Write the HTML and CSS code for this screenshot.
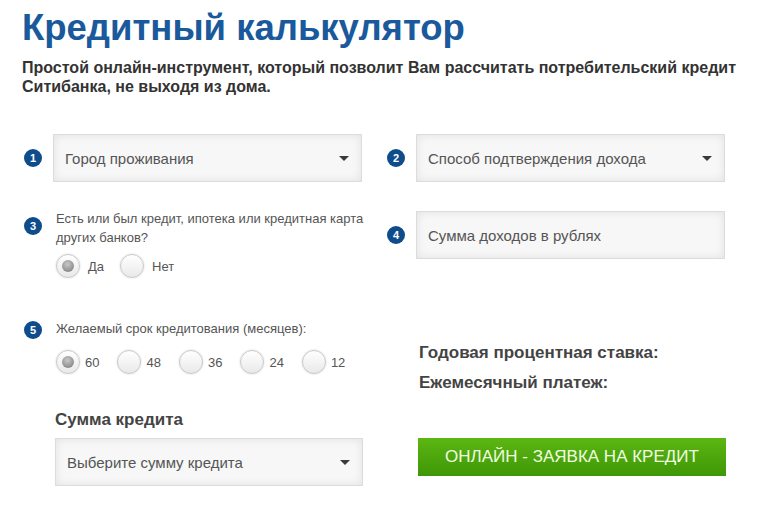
FILE: index.html
```html
<!DOCTYPE html>
<html lang="ru">
<head>
<meta charset="utf-8">
<title>Кредитный калькулятор</title>
<link rel="stylesheet" href="styles.css">
</head>
<body>
<div class="page">
  <h1 class="title">Кредитный калькулятор</h1>
  <p class="lead">Простой онлайн-инструмент, который позволит Вам рассчитать потребительский кредит Ситибанка, не выходя из дома.</p>

  <div class="calc">
    <div class="item row1">
      <span class="badge">1</span>
      <div class="field select"><span>Город проживания</span><i class="arrow"></i></div>
    </div>
    <div class="item row1">
      <span class="badge">2</span>
      <div class="field select"><span>Способ подтверждения дохода</span><i class="arrow"></i></div>
    </div>

    <div class="item row2 q3">
      <span class="badge">3</span>
      <div class="group">
        <div class="label two">Есть или был кредит, ипотека или кредитная карта других банков?</div>
        <div class="radios yesno">
          <label class="opt"><span class="radio on"></span>Да</label>
          <label class="opt"><span class="radio"></span>Нет</label>
        </div>
      </div>
    </div>
    <div class="item row2 q4">
      <span class="badge">4</span>
      <div class="field"><span>Сумма доходов в рублях</span></div>
    </div>

    <div class="item row3 top">
      <span class="badge b5">5</span>
      <div class="group">
        <div class="label">Желаемый срок кредитования (месяцев):</div>
        <div class="radios terms">
          <label class="opt"><span class="radio on"></span>60</label>
          <label class="opt"><span class="radio"></span>48</label>
          <label class="opt"><span class="radio"></span>36</label>
          <label class="opt"><span class="radio"></span>24</label>
          <label class="opt"><span class="radio"></span>12</label>
        </div>
      </div>
    </div>
    <div class="item row3 results">
      <div class="result">Годовая процентная ставка:</div>
      <div class="result">Ежемесячный платеж:</div>
    </div>

    <div class="item row4 sum">
      <div class="sum-title">Сумма кредита</div>
      <div class="field select sum-field"><span>Выберите сумму кредита</span><i class="arrow"></i></div>
    </div>
    <div class="item row4 action">
      <button class="apply">ОНЛАЙН - ЗАЯВКА НА КРЕДИТ</button>
    </div>
  </div>
</div>
</body>
</html>
```
FILE: styles.css
```css
* { box-sizing: border-box; }
html, body { margin: 0; padding: 0; background: #fff; }
body { font-family: "Liberation Sans", Arial, sans-serif; color: #333; }

.page { padding: 8px 22px 0 22px; width: 770px; }

.title {
  margin: 0;
  font-size: 36.5px;
  line-height: 40px;
  font-weight: bold;
  color: #1a5a9c;
}

.lead {
  margin: 10px 0 0 0;
  font-size: 16px;
  line-height: 19px;
  font-weight: bold;
  color: #333;
  width: 740px;
}

.calc {
  margin-top: 38px;
  display: grid;
  grid-template-columns: 340px 341px;
  column-gap: 23px;
  align-items: start;
}

.item { display: flex; align-items: center; }
.item.top { align-items: flex-start; }

.badge {
  flex: none;
  width: 18px;
  height: 18px;
  margin: 0 11px 0 2px;
  border-radius: 50%;
  background: #0f4c8c;
  color: #fff;
  font-size: 11px;
  font-weight: bold;
  line-height: 18px;
  text-align: center;
}

.field {
  position: relative;
  width: 309px;
  height: 48px;
  border: 1px solid #dcdcdc;
  background: #f7f7f7;
  box-shadow: inset 0 0 10px rgba(0, 0, 0, 0.09);
  display: flex;
  align-items: center;
  padding-left: 11px;
  font-size: 15px;
  color: #555;
}

.arrow {
  position: absolute;
  right: 12px;
  top: 21px;
  width: 0;
  height: 0;
  border-left: 5px solid transparent;
  border-right: 5px solid transparent;
  border-top: 5px solid #3a3a3a;
}

.group { padding-left: 3px; }

.row2 { margin-top: 29px; }
.row2.q3 { margin-top: 27px; align-items: flex-start; }
.row2.q3 .badge { margin-top: 8px; }

.label {
  font-size: 13px;
  line-height: 19px;
  color: #555;
}
.label.two { width: 310px; }

.radios { display: flex; align-items: center; }
.opt {
  display: flex;
  align-items: center;
  font-size: 13px;
  color: #555;
}
.radio {
  width: 24px;
  height: 24px;
  border-radius: 50%;
  border: 1px solid #c9c9c9;
  background: linear-gradient(#ffffff, #e9e9e9);
  box-shadow: 0 0 2px rgba(0,0,0,0.18);
  position: relative;
}
.radio.on::after {
  content: "";
  position: absolute;
  left: 5px;
  top: 5px;
  width: 12px;
  height: 12px;
  border-radius: 50%;
  background: radial-gradient(circle at 45% 35%, #c8c8c8, #777);
}

.yesno { margin-top: 7px; }
.yesno .radio { margin-right: 8px; }
.yesno .opt + .opt { margin-left: 16px; }

.terms { margin-top: 12px; }
.terms .radio { margin-right: 5px; }
.terms .opt + .opt { margin-left: 18px; }

.row3 { margin-top: 41px; }
.row3 .badge { margin-top: 2px; }

.results {
  flex-direction: column;
  align-items: flex-start;
  padding-top: 19px;
  padding-left: 34px;
}
.result {
  font-size: 17px;
  line-height: 30px;
  font-weight: bold;
  color: #444;
}

.row4 { margin-top: 11px; }
.sum {
  flex-direction: column;
  align-items: flex-start;
  padding-left: 33px;
}
.sum-title {
  font-size: 17px;
  line-height: 22px;
  font-weight: bold;
  color: #444;
}
.sum-field { margin-top: 7px; width: 308px; }

.action { align-items: flex-start; padding-left: 33px; }
.apply {
  margin-top: 29px;
  width: 308px;
  height: 38px;
  border: none;
  background: linear-gradient(#5cb612, #3f9707);
  color: #effee0;
  font-family: "Liberation Sans", Arial, sans-serif;
  font-size: 17px;
  padding: 0;
  cursor: pointer;
}
```
